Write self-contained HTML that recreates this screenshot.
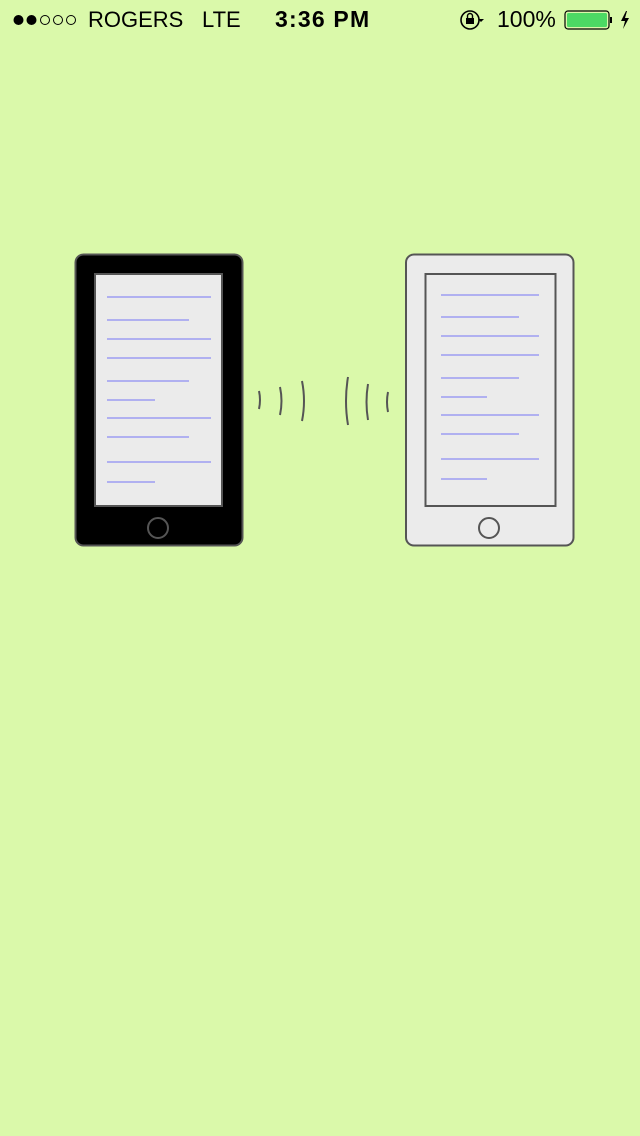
<!DOCTYPE html>
<html><head><meta charset="utf-8"><style>
html,body{margin:0;padding:0;width:640px;height:1136px;background:#daf9aa;overflow:hidden;font-family:"Liberation Sans",sans-serif;}
.t{position:absolute;top:7px;font-size:22px;color:#000;white-space:nowrap;}
</style></head><body>
<div class="t" style="left:88px">ROGERS</div>
<div class="t" style="left:202px">LTE</div>
<div class="t" style="left:275px;font-weight:bold;font-size:23px;letter-spacing:1.2px;top:6px">3:36 PM</div>
<div class="t" style="left:497px;font-size:23px;top:6px">100%</div>
<svg width="640" height="1136" style="position:absolute;left:0;top:0">
<circle cx="18.5" cy="20" r="5" fill="#000"/>
<circle cx="31.5" cy="20" r="5" fill="#000"/>
<circle cx="45" cy="20" r="4.5" fill="none" stroke="#000" stroke-width="1"/>
<circle cx="58" cy="20" r="4.5" fill="none" stroke="#000" stroke-width="1"/>
<circle cx="71" cy="20" r="4.5" fill="none" stroke="#000" stroke-width="1"/>
<g fill="none" stroke="#000" stroke-width="1.6">
<circle cx="470" cy="20" r="9"/>
</g>
<rect x="466" y="18" width="8" height="6" fill="#000"/>
<path d="M467.5 18v-2a2.5 2.5 0 0 1 5 0v2" fill="none" stroke="#000" stroke-width="1.4"/>
<path d="M478 19l3 3 3-3z" fill="#000"/>
<rect x="565" y="11" width="44" height="18" rx="3" fill="none" stroke="#000" stroke-width="1.2"/>
<rect x="567" y="13" width="40" height="14" rx="1.5" fill="#4cd964"/>
<rect x="610" y="17" width="2" height="6" fill="#000"/>
<path d="M626 11l-5 10h4l-2 8 6-11h-4l2-7z" fill="#000"/>

<rect x="75.5" y="254.5" width="167" height="291" rx="8" fill="#000" stroke="#555" stroke-width="2"/>
<rect x="95" y="274" width="127" height="232" fill="#ebebeb" stroke="#555" stroke-width="2"/>
<circle cx="158" cy="528" r="10" fill="none" stroke="#555" stroke-width="2"/>
<g stroke="#b0b0f0" stroke-width="2">
<line x1="107" y1="297" x2="211" y2="297"/><line x1="107" y1="320" x2="189" y2="320"/>
<line x1="107" y1="339" x2="211" y2="339"/><line x1="107" y1="358" x2="211" y2="358"/>
<line x1="107" y1="381" x2="189" y2="381"/><line x1="107" y1="400" x2="155" y2="400"/>
<line x1="107" y1="418" x2="211" y2="418"/><line x1="107" y1="437" x2="189" y2="437"/>
<line x1="107" y1="462" x2="211" y2="462"/><line x1="107" y1="482" x2="155" y2="482"/>
</g>

<rect x="406" y="254.5" width="167.5" height="291" rx="8" fill="#ebebeb" stroke="#555" stroke-width="2"/>
<rect x="425.5" y="274" width="130" height="232" fill="#ebebeb" stroke="#555" stroke-width="2"/>
<circle cx="489" cy="528" r="10" fill="none" stroke="#555" stroke-width="2"/>
<g stroke="#b0b0f0" stroke-width="2">
<line x1="441" y1="295" x2="539" y2="295"/><line x1="441" y1="317" x2="519" y2="317"/>
<line x1="441" y1="336" x2="539" y2="336"/><line x1="441" y1="355" x2="539" y2="355"/>
<line x1="441" y1="378" x2="519" y2="378"/><line x1="441" y1="397" x2="487" y2="397"/>
<line x1="441" y1="415" x2="539" y2="415"/><line x1="441" y1="434" x2="519" y2="434"/>
<line x1="441" y1="459" x2="539" y2="459"/><line x1="441" y1="479" x2="487" y2="479"/>
</g>

<g fill="none" stroke="#555" stroke-width="2">
<path d="M259 391q2 9 0 18"/>
<path d="M280 387q3 14 0 28"/>
<path d="M302 381q4 20 0 40"/>
<path d="M348 377q-4 24 0 48"/>
<path d="M368 384q-3 18 0 36"/>
<path d="M388 392q-2 10 0 20"/>
</g>
</svg>
</body></html>
